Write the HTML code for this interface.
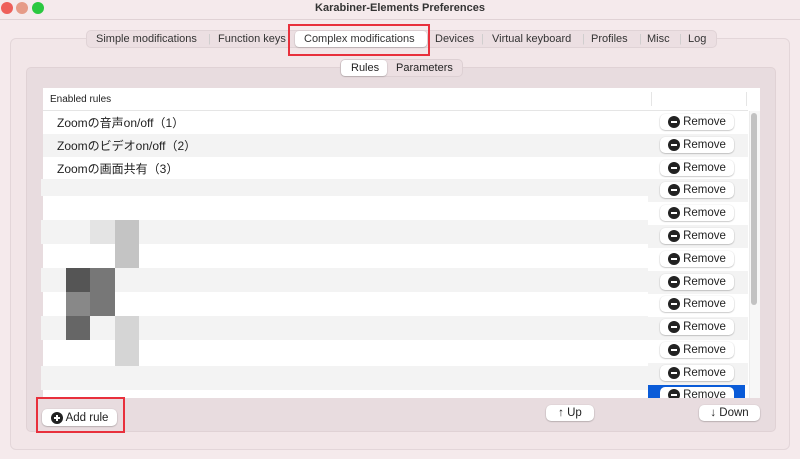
<!DOCTYPE html>
<html><head><meta charset="utf-8"><style>
*{box-sizing:border-box;margin:0;padding:0}
body{width:800px;height:459px;background:#f5eaec;font-family:"Liberation Sans","Noto Sans CJK JP",sans-serif;position:relative;overflow:hidden;color:#222}
.a{position:absolute}
.dot{position:absolute;top:2px;width:12px;height:12px;border-radius:50%}
.btn{position:absolute;background:#fff;border-radius:5px;box-shadow:0 0.5px 1.5px rgba(0,0,0,.35);font-size:11.5px;display:flex;align-items:center;justify-content:center;gap:3px;color:#222}
.ic{width:12px;height:12px;border-radius:50%;background:#222;position:relative;display:inline-block}
.ic:before{content:"";position:absolute;left:3px;top:5px;width:6px;height:2px;background:#fff}
.ic.p:after{content:"";position:absolute;left:5px;top:3px;width:2px;height:6px;background:#fff}
.row{position:absolute;left:43px;width:705px;height:23px;font-size:12px;padding:3px 0 0 14px}
.tb span{font-size:11px}
</style></head><body>
<div class="dot" style="left:1px;background:#ee5f5a"></div>
<div class="dot" style="left:16px;background:#e69b88"></div>
<div class="dot" style="left:32px;background:#2bc840"></div>
<div class="a" style="left:0;top:2px;width:800px;text-align:center;font-size:11px;font-weight:bold;color:#333">Karabiner-Elements Preferences</div>
<div class="a" style="left:0;top:19px;width:800px;height:1px;background:#e0d2d5"></div>
<div class="a" style="left:10px;top:38px;width:780px;height:412px;border:1px solid #e3d6d9;border-radius:6px;background:#f2e6e8"></div>
<div class="a tb" style="left:86px;top:30px;width:631px;height:18px;background:#ecdfe2;border-radius:5px;border:1px solid #e0d3d6;color:#333">
<span class="a" style="left:9px;top:2px">Simple modifications</span>
<span class="a" style="left:121px;top:2px;color:#ccc">|</span>
<span class="a" style="left:131px;top:2px">Function keys</span>
<span class="a" style="left:208px;top:0px;width:132px;height:16px;background:#fff;border-radius:4px;box-shadow:0 .5px 1.5px rgba(0,0,0,.3)"></span>
<span class="a" style="left:217px;top:2px">Complex modifications</span>
<span class="a" style="left:348px;top:2px">Devices</span>
<span class="a" style="left:394px;top:2px;color:#ccc">|</span>
<span class="a" style="left:405px;top:2px">Virtual keyboard</span>
<span class="a" style="left:495px;top:2px;color:#ccc">|</span>
<span class="a" style="left:504px;top:2px">Profiles</span>
<span class="a" style="left:552px;top:2px;color:#ccc">|</span>
<span class="a" style="left:560px;top:2px">Misc</span>
<span class="a" style="left:592px;top:2px;color:#ccc">|</span>
<span class="a" style="left:601px;top:2px">Log</span>
</div>
<div class="a" style="left:288px;top:24px;width:142px;height:32px;border:2px solid #e8303c"></div>
<div class="a" style="left:26px;top:67px;width:750px;height:365px;background:#e8dcdf;border:1px solid #e0d2d5;border-radius:5px"></div>
<div class="a tb" style="left:340px;top:59px;width:123px;height:18px;background:#ecdfe2;border-radius:5px;border:1px solid #ddd0d3">
<span class="a" style="left:0;top:0;width:46px;height:16px;background:#fff;border-radius:4px;box-shadow:0 .5px 1.5px rgba(0,0,0,.3)"></span>
<span class="a" style="left:10px;top:2px">Rules</span>
<span class="a" style="left:55px;top:2px">Parameters</span>
</div>
<div class="a" style="left:43px;top:88px;width:717px;height:310px;background:#fff"></div>
<div class="a" style="left:50px;top:94px;font-size:10px">Enabled rules</div>
<div class="a" style="left:651px;top:92px;width:1px;height:14px;background:#e5e5e5"></div>
<div class="a" style="left:746px;top:92px;width:1px;height:14px;background:#e5e5e5"></div>
<div class="a" style="left:43px;top:110px;width:705px;height:1px;background:#e5e5e5"></div>
<div class="row" style="top:111px;background:#fff">Zoomの音声on/off（1）</div>
<div class="row" style="top:134px;background:#f3f3f3">Zoomのビデオon/off（2）</div>
<div class="row" style="top:157px;background:#fff">Zoomの画面共有（3）</div>
<div class="a" style="left:41px;top:179px;width:607px;height:17px;background:#f3f3f3"></div>
<div class="a" style="left:648px;top:179px;width:100px;height:23px;background:#f3f3f3"></div>
<div class="a" style="left:648px;top:225px;width:100px;height:23px;background:#f3f3f3"></div>
<div class="a" style="left:648px;top:271px;width:100px;height:23px;background:#f3f3f3"></div>
<div class="a" style="left:648px;top:317px;width:100px;height:23px;background:#f3f3f3"></div>
<div class="a" style="left:648px;top:363px;width:100px;height:22px;background:#f3f3f3"></div>
<div class="a" style="left:41px;top:220px;width:607px;height:24px;background:#f3f3f3"></div>
<div class="a" style="left:41px;top:268px;width:607px;height:24px;background:#f3f3f3"></div>
<div class="a" style="left:41px;top:316px;width:607px;height:24px;background:#f3f3f3"></div>
<div class="a" style="left:41px;top:366px;width:607px;height:24px;background:#f3f3f3"></div>
<div class="a" style="left:90px;top:220px;width:25px;height:24px;background:#e4e4e4"></div>
<div class="a" style="left:115px;top:220px;width:24px;height:48px;background:#c4c4c4"></div>
<div class="a" style="left:66px;top:268px;width:24px;height:24px;background:#555"></div>
<div class="a" style="left:90px;top:268px;width:25px;height:48px;background:#777"></div>
<div class="a" style="left:66px;top:292px;width:24px;height:24px;background:#888"></div>
<div class="a" style="left:66px;top:316px;width:24px;height:24px;background:#666"></div>
<div class="a" style="left:115px;top:316px;width:24px;height:50px;background:#d5d5d5"></div>
<div class="a" style="left:648px;top:385px;width:97px;height:13px;background:#0a5bd8"></div>
<div class="a" style="left:749px;top:111px;width:11px;height:287px;background:#f7f7f7;border-left:1px solid #ececec"></div>
<div class="a" style="left:751px;top:113px;width:6px;height:192px;background:#c2c2c2;border-radius:3px"></div>
<div class="btn" style="left:660px;top:114px;width:74px;height:16px"><span class="ic"></span>Remove</div>
<div class="btn" style="left:660px;top:137px;width:74px;height:16px"><span class="ic"></span>Remove</div>
<div class="btn" style="left:660px;top:160px;width:74px;height:16px"><span class="ic"></span>Remove</div>
<div class="btn" style="left:660px;top:182px;width:74px;height:16px"><span class="ic"></span>Remove</div>
<div class="btn" style="left:660px;top:205px;width:74px;height:16px"><span class="ic"></span>Remove</div>
<div class="btn" style="left:660px;top:228px;width:74px;height:16px"><span class="ic"></span>Remove</div>
<div class="btn" style="left:660px;top:251px;width:74px;height:16px"><span class="ic"></span>Remove</div>
<div class="btn" style="left:660px;top:274px;width:74px;height:16px"><span class="ic"></span>Remove</div>
<div class="btn" style="left:660px;top:296px;width:74px;height:16px"><span class="ic"></span>Remove</div>
<div class="btn" style="left:660px;top:319px;width:74px;height:16px"><span class="ic"></span>Remove</div>
<div class="btn" style="left:660px;top:342px;width:74px;height:16px"><span class="ic"></span>Remove</div>
<div class="btn" style="left:660px;top:365px;width:74px;height:16px"><span class="ic"></span>Remove</div>
<div class="a" style="left:660px;top:387px;width:74px;height:11px;overflow:hidden"><div class="btn" style="left:0;top:0;width:74px;height:16px"><span class="ic"></span>Remove</div></div>
<div class="btn" style="left:42px;top:409px;width:75px;height:17px"><span class="ic p"></span>Add rule</div>
<div class="a" style="left:36px;top:397px;width:89px;height:36px;border:2px solid #e8303c"></div>
<div class="btn" style="left:546px;top:405px;width:48px;height:16px">↑ Up</div>
<div class="btn" style="left:699px;top:405px;width:61px;height:16px">↓ Down</div>
</body></html>
